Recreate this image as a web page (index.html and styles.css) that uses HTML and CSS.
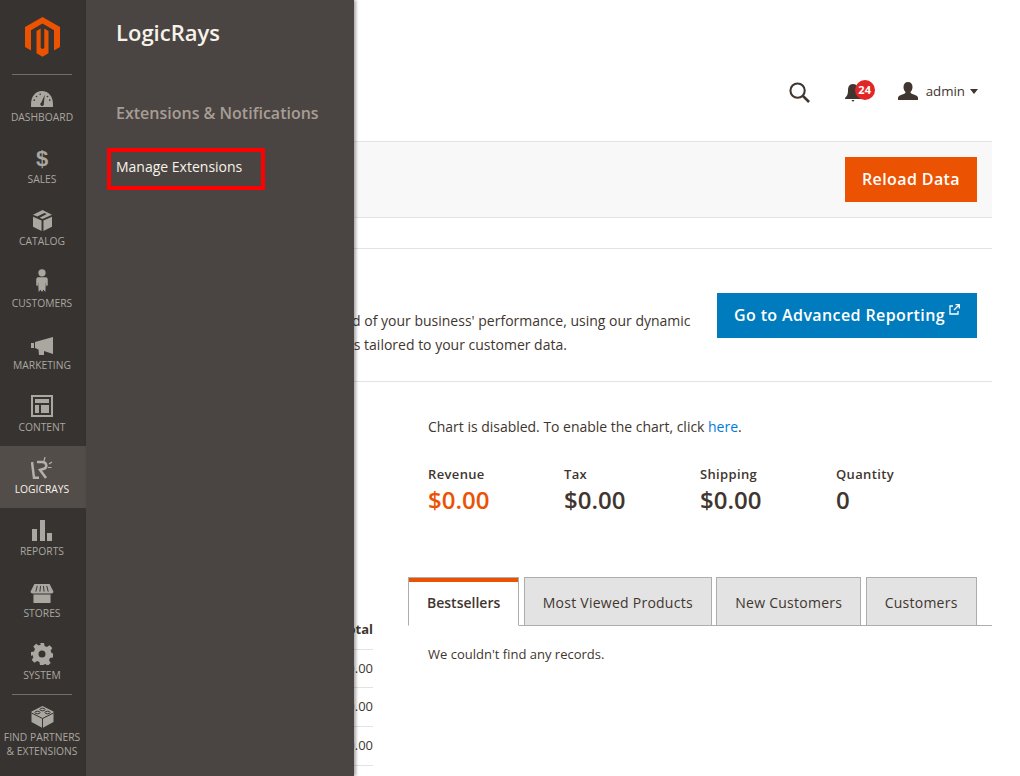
FILE: index.html
```html
<!DOCTYPE html>
<html lang="en">
<head>
<meta charset="utf-8">
<title>Dashboard</title>
<link rel="stylesheet" href="styles.css">
</head>
<body>
<div class="app">
  <nav class="nav">
    <div class="logo">
      <svg width="35" height="40" viewBox="0 0 35 40"><path fill="#eb5202" d="M17.500 0 35 10V30L29 33.500V13.200L17.500 6.500 6 13.200V33.500L0 30V10Z"/><path fill="#eb5202" d="M11.500 14 15.700 11.600V31L17.500 32 19.300 31V11.600L23.500 14V36.300L17.500 39.700 11.500 36.300Z"/></svg>
    </div>
    <a class="item"><svg class="ic" width="22" height="16" viewBox="0 0 24 17.500"><path d="M12 0C5 0 0 6 0 14v3.500h24V14C24 6 19 0 12 0Z"/><path class="cut" d="M15 4 11.300 12.500a2 2 0 1 0 2.700 1.200Z"/><circle class="cut" cx="6" cy="6" r=".9"/><circle class="cut" cx="10" cy="3.500" r=".9"/><circle class="cut" cx="18" cy="6" r=".9"/><circle class="cut" cx="3.500" cy="10" r=".9"/><circle class="cut" cx="20.500" cy="10" r=".9"/></svg><span>Dashboard</span></a>
    <a class="item"><span class="dollar">$</span><span>Sales</span></a>
    <a class="item"><svg class="ic" width="19" height="21" viewBox="0 0 20 22"><path d="M10 0 20 5 10 9.500 7 8 14.500 4.200 12 3 4.500 6.800 0 5ZM0 7l9 4v11L0 17.500ZM20 7v10.500L11 22V11Z"/></svg><span>Catalog</span></a>
    <a class="item"><svg class="ic" width="12" height="24" viewBox="0 0 12 25"><circle cx="6" cy="4" r="3.800"/><path d="M2 8.500h8c1.300 0 2 1 2 2.500v6l-1.500 1-.5-4.500L9.500 24 7.500 21.500 6 24 4.500 21.500 2.500 24 2 13.500 1.500 18 0 17v-6c0-1.500.7-2.500 2-2.500Z"/></svg><span>Customers</span></a>
    <a class="item"><svg class="ic" width="22" height="18" viewBox="0 0 22 18"><path d="M0 6h3v5H0ZM4 5 22 0v17l-9-3v4H8l-.5-5.500L4 11Z"/></svg><span>Marketing</span></a>
    <a class="item"><svg class="ic" width="22" height="22" viewBox="0 0 22 22"><path fill-rule="evenodd" d="M0 0h22v22H0ZM2 2v18h18V2ZM4 4h14v4H4ZM4 10h4v8H4ZM10 10h8v8h-8Z"/></svg><span>Content</span></a>
    <a class="item active"><svg class="ic lr" width="22" height="22" viewBox="0 0 22 22"><path d="M1 5 3 20.800H8M6 5H11C16 5 17 11 12 12L9 13 15 21" fill="none" stroke-width="2.500"/><path d="M14 0 13 4M21 5 18 7M20.500 10.500H17" fill="none" stroke-width="1.200"/></svg><span>LogicRays</span></a>
    <a class="item"><svg class="ic" width="20" height="21" viewBox="0 0 20 21"><path d="M0 9h5v12H0ZM8 0h5v21H8ZM15 13h5v8h-5Z"/></svg><span>Reports</span></a>
    <a class="item"><svg class="ic" width="24" height="19" viewBox="0 0 24 20"><path d="M4 0h16l4 8c0 1.500-1 2-2 2H2C1 10 0 9.500 0 8ZM3 11h18v9H3Z"/><path class="cut-line" d="M7 2 5.500 8M10.500 2l-.7 6M13.500 2l.7 6M17 2l1.500 6"/></svg><span>Stores</span></a>
    <a class="item"><svg class="ic" width="22" height="22" viewBox="0 0 22 22"><path fill-rule="evenodd" d="M9 0h4l.6 3 2.300 1 2.600-1.700 2.800 2.800L19.600 7.700l1 2.300 1.400.6v3.800l-3 .6-1 2.300 1.700 2.600-2.800 2.800-2.600-1.700-2.300 1L13 22H9l-.6-3-2.300-1-2.600 1.700-2.800-2.800 1.700-2.600-1-2.300L0 13V9l3-.6 1-2.300L2.300 3.500 5.100.7 7.700 2.400 10 1.400ZM11 7.500a3.500 3.500 0 1 0 0 7 3.500 3.500 0 0 0 0-7Z"/></svg><span>System</span></a>
    <a class="item partners"><svg class="ic" width="23" height="22" viewBox="0 0 22 22"><path d="M11 0 22 5.500v10.500L11 22 0 16V5.500Z"/><path class="cut-line" d="M0 7 11 12.500 22 7M11 12.500V22"/><ellipse class="cut-line" cx="11" cy="3.500" rx="2.500" ry="1.300"/><ellipse class="cut-line" cx="6" cy="6.500" rx="2.500" ry="1.300"/><ellipse class="cut-line" cx="16" cy="6.500" rx="2.500" ry="1.300"/></svg><span>Find Partners<br>&amp; Extensions</span></a>
  </nav>

  <aside class="submenu">
    <h2 class="sub-title">LogicRays</h2>
    <h3 class="sub-head">Extensions &amp; Notifications</h3>
    <a class="sub-link">Manage Extensions</a>
  </aside>

  <main class="main">
    <header class="top">
      <div class="actions">
        <svg class="search" width="21" height="21" viewBox="0 0 22 22"><circle cx="9" cy="9" r="7.500" fill="none" stroke="#41362f" stroke-width="2.200"/><path d="M14.500 14.500 21 21" stroke="#41362f" stroke-width="2.800"/></svg>
        <div class="bell">
          <svg width="16" height="18" viewBox="0 0 16 18"><path fill="#41362f" d="M8 0c4 0 5 3 5 7 0 3 1 5 3 7v1H0v-1c2-2 3-4 3-7 0-4 1-7 5-7ZM6.500 16h3L8 18Z"/></svg>
          <span class="badge">24</span>
        </div>
        <div class="user">
          <svg width="20" height="18" viewBox="0 0 20 18"><path fill="#41362f" d="M10 0c3 0 4.500 2 4.500 5 0 2-.8 4-2 5 0 1 .5 1.500 2.500 2.200 3 1 5 1.800 5 3.800v2H0v-2c0-2 2-2.800 5-3.800 2-.7 2.500-1.200 2.500-2.200-1.200-1-2-3-2-5 0-3 1.500-5 4.500-5Z"/></svg>
          <span class="uname">admin</span>
          <span class="caret"></span>
        </div>
      </div>
    </header>

    <div class="toolbar">
      <button class="btn btn-orange">Reload Data</button>
    </div>

    <section class="adv">
      <p class="adv-copy">Gain new insights and take command of your business' performance, using our dynamic product, order, and customer reports tailored to your customer data.</p>
      <button class="btn btn-blue">Go to Advanced Reporting<svg class="ext" width="11" height="11" viewBox="0 0 11 11"><path fill="none" stroke="#fff" stroke-width="1.300" d="M4 2H1v8h8V7M5 6l5-5M6.500 .7h3.800v3.800"/></svg></button>
    </section>

    <section class="dash">
      <div class="left-col">
        <table class="orders">
          <thead><tr><th>Total</th></tr></thead>
          <tbody>
            <tr><td>$0.00</td></tr>
            <tr><td>$0.00</td></tr>
            <tr><td>$0.00</td></tr>
          </tbody>
        </table>
      </div>
      <div class="right-col">
        <p class="chart-note">Chart is disabled. To enable the chart, click <a class="here">here</a>.</p>
        <div class="stats">
          <div class="stat"><div class="stat-label">Revenue</div><div class="stat-val orange">$0.00</div></div>
          <div class="stat"><div class="stat-label">Tax</div><div class="stat-val">$0.00</div></div>
          <div class="stat"><div class="stat-label">Shipping</div><div class="stat-val">$0.00</div></div>
          <div class="stat"><div class="stat-label">Quantity</div><div class="stat-val">0</div></div>
        </div>
        <div class="tabs">
          <a class="tab on">Bestsellers</a>
          <a class="tab">Most Viewed Products</a>
          <a class="tab">New Customers</a>
          <a class="tab">Customers</a>
        </div>
        <p class="empty">We couldn't find any records.</p>
      </div>
    </section>
  </main>
</div>
</body>
</html>
```
FILE: styles.css
```css
* { box-sizing: border-box; }
html, body { margin: 0; height: 776px; overflow: hidden; background: #fff; }
body { font-family: "Open Sans", "Liberation Sans", sans-serif; color: #41362f; font-size: 14px; }
.app { display: flex; position: relative; height: 776px; width: 992px; }
.nav { width: 86px; flex: none; background: #373330; height: 776px; }
.logo { height: 75px; margin: 0 14px -1px 12px; padding-top: 17px; display: flex; justify-content: center; border-bottom: 1px solid #736d69; width: 60px; }
.item { height: 62px; display: flex; flex-direction: column; align-items: center; justify-content: flex-end; padding: 0 2px 13px 0; gap: 4px; color: #aaa6a0; font-size: 10.3px; line-height: 12px; text-transform: uppercase; text-align: center; }
.item.active { background: #524d49; color: #f7f3eb; }
.item.partners { height: 82px; justify-content: flex-start; padding: 12px 2px 0 0; gap: 2px; line-height: 14px; background: linear-gradient(#736d69, #736d69) 12px 0 / 60px 1px no-repeat; }
.ic { fill: #aaa6a0; stroke: #aaa6a0; stroke-width: 0; display: block; }
.lr { stroke: #b4b0aa; fill: none; }
.cut { fill: #373330; }
.cut-line { fill: none; stroke: #373330; stroke-width: 1; }
.dollar { font-family: "Liberation Sans", sans-serif; font-size: 22px; line-height: 20px; font-weight: 700; color: #aaa6a0; }
.submenu { position: absolute; left: 86px; top: 0; width: 268px; height: 776px; background: #4a4542; box-shadow: 2px 0 3px rgba(0,0,0,.35); padding: 16px 0 0 30px; z-index: 5; }
.sub-title { margin: 0; font-size: 22px; font-weight: 600; line-height: 32px; color: #f7f3eb; }
.sub-head { margin: 53px 0 0; font-size: 16px; font-weight: 600; line-height: 24px; color: #a79d95; }
.sub-link { display: block; width: 158px; height: 42px; margin: 23px 0 0 -9px; border: 4px solid #f00; padding-left: 5px; font-size: 14px; line-height: 30px; color: #f7f3eb; }
.main { flex: 1; min-width: 0; }
.top { height: 141px; display: flex; justify-content: flex-end; padding: 0 14px 0 30px; }
.actions { display: flex; align-items: flex-start; padding-top: 82px; }
.search { margin-right: 35px; }
.bell { position: relative; margin-right: 37px; padding-top: 2px; }
.badge { position: absolute; left: 10px; top: -2px; width: 20px; height: 20px; border-radius: 50%; background: #e22626; color: #fff; font-size: 11px; font-weight: 700; line-height: 20px; text-align: center; }
.user { display: flex; align-items: center; margin-top: -1px; }
.uname { margin-left: 8px; font-size: 13.3px; line-height: 20px; }
.caret { margin-left: 5px; border: 4px solid transparent; border-top: 5px solid #41362f; border-bottom: 0; }
.toolbar { height: 77px; background: #f8f8f8; border-top: 1px solid #e3e3e3; border-bottom: 1px solid #e3e3e3; display: flex; justify-content: flex-end; align-items: flex-start; padding: 15px 15px 0 0; }
.btn { border: 0; color: #fff; font-family: inherit; font-size: 16px; font-weight: 600; height: 45px; letter-spacing: .4px; padding: 0 17px 2px; white-space: nowrap; }
.btn-orange { background: #eb5202; width: 132px; padding: 0 0 2px; }
.btn-blue { background: #007bbd; display: flex; align-items: center; flex: none; }
.ext { margin: -10px 0 0 4px; }
.adv { height: 134px; margin-top: 30px; border-top: 1px solid #e3e3e3; border-bottom: 1px solid #e3e3e3; display: flex; justify-content: space-between; padding: 44px 15px 0 30px; }
.adv-copy { margin: 16px 0 0; width: 580px; font-size: 14px; line-height: 24px; }
.dash { display: flex; position: relative; }
.left-col { width: 287px; padding-top: 228px; flex: none; }
.orders { width: 287px; border-collapse: collapse; font-size: 13px; }
.orders th { text-align: right; padding: 0; height: 39px; border-bottom: 1px solid #e3e3e3; }
.orders td { text-align: right; height: 39px; padding: 0 0 2px; border-bottom: 1px solid #e3e3e3; }
.orders tbody tr:first-child td { height: 38px; padding: 0; }
.right-col { margin-left: 35px; width: 584px; }
.chart-note { margin: 34px 0 0 20px; font-size: 14px; line-height: 22px; letter-spacing: -.02px; }
.here { color: #007bdb; }
.stats { display: flex; margin: 28px 0 0 20px; }
.stat { width: 136px; }
.stat-label { font-size: 13px; font-weight: 600; line-height: 16px; letter-spacing: .35px; }
.stat-val { font-size: 24px; font-weight: 600; line-height: 34px; margin-top: 1px; }
.orange { color: #eb5202; }
.tabs { display: flex; align-items: flex-start; margin-top: 60px; height: 49px; gap: 4.5px; border-bottom: 1px solid #adadad; }
.tab { height: 49px; padding: 0 18px; background: #e3e3e3; border: 1px solid #adadad; font-size: 14px; letter-spacing: .25px; line-height: 50px; white-space: nowrap; }
.tab.on { background: #fff; font-weight: 600; letter-spacing: 0; border-bottom-color: #fff; box-shadow: inset 0 4px 0 #eb5202; }
.empty { margin: 18px 0 0 20px; font-size: 13px; line-height: 20px; }
```
